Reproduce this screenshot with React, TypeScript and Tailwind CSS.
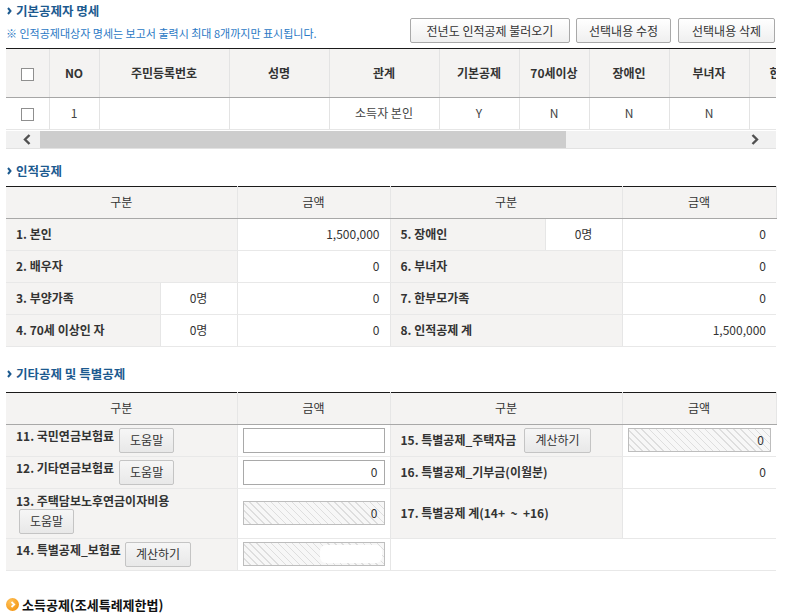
import React from 'react';

const Chevron = () => (
  <svg width="5" height="8" viewBox="0 0 5 8" className="ml-[7px] mr-[4px] shrink-0">
    <path d="M1 1l2.5 3L1 7" stroke="#1c5a8f" strokeWidth="2" fill="none" />
  </svg>
);

const SectionTitle = ({ children, className = '' }: { children: React.ReactNode; className?: string }) => (
  <div className={`flex items-center h-[20px] ${className}`}>
    <Chevron />
    <span className="text-[12.5px] font-bold text-[#1c5a8f] leading-[20px]">{children}</span>
  </div>
);

const Checkbox = () => <span className="inline-block w-[13px] h-[13px] border border-[#8f8f8f] bg-white align-middle" />;

const SmallButton = ({ children, className = '' }: { children: React.ReactNode; className?: string }) => (
  <button className={`h-[25px] px-[10px] shrink-0 bg-linear-to-b from-[#f6f6f6] to-[#e8e8e8] border border-[#c4c4c4] rounded-[2px] text-[12px] text-[#333] leading-none ${className}`}>
    {children}
  </button>
);

const TopButton = ({ children, className = '' }: { children: React.ReactNode; className?: string }) => (
  <button className={`h-[25px] bg-linear-to-b from-white to-[#efefef] border border-[#a9a9a9] rounded-[2px] text-[12px] text-[#333] leading-none ${className}`}>
    {children}
  </button>
);

const Hatched = ({ value, blob = false }: { value?: string; blob?: boolean }) => (
  <div className="mx-[5px] h-[24px] border border-[#bdbdbd] bg-[repeating-linear-gradient(45deg,#f7f7f7_0px,#f7f7f7_4px,#dedede_4px,#dedede_5px)] flex items-center justify-end pr-[6px] text-[12px] text-[#333]">
    {blob ? <span className="w-[62px] h-[18px] bg-white rounded-[6px] -mr-[4px]" /> : value}
  </div>
);

const Input = ({ value }: { value?: string }) => (
  <div className="mx-[5px] h-[25px] border border-[#a9a9a9] bg-white flex items-center justify-end pr-[6px] text-[12px] text-[#333]">
    {value}
  </div>
);

const th1 = 'bg-[#f4f3f2] border-r border-r-[#e3e3e3] border-b border-b-[#a6a6a6] text-[12px] font-bold text-[#333] text-center';
const td1 = 'border-r border-r-[#e3e3e3] border-b border-b-[#e6e6e6] text-[12px] text-[#444] text-center';

const th = 'h-[32px] bg-[#f4f3f2] border-r border-r-[#e6e6e6] border-b border-b-[#a8a8a8] text-[12px] font-normal text-[#333] text-center';
const lbl = 'h-[32px] bg-[#f4f3f2] border-r border-r-[#e6e6e6] border-b border-b-[#e8e8e8] text-[12px] font-bold text-[#333] text-left pl-[10px]';
const val = 'h-[32px] bg-white border-r border-r-[#e6e6e6] border-b border-b-[#e8e8e8] text-[12px] text-[#333] text-right pr-[10px]';
const valLast = 'h-[32px] bg-white border-b border-b-[#e8e8e8] text-[12px] text-[#333] text-right pr-[10px]';
const inp = 'h-[32px] bg-white border-r border-r-[#e6e6e6] border-b border-b-[#e8e8e8] text-[12px] text-[#333] p-0';
const inpLast = 'h-[32px] bg-white border-b border-b-[#e8e8e8] text-[12px] text-[#333] p-0';
const cnt = 'h-[32px] bg-white border-r border-r-[#e6e6e6] border-b border-b-[#e8e8e8] text-[12px] text-[#333] text-center';

const headers1 = ['주민등록번호', '성명', '관계', '기본공제', '70세이상', '장애인', '부녀자', '한부모'];
const widths1 = [43, 50, 130, 100, 110, 80, 70, 80, 80, 74];
const row1 = ['', '', '소득자 본인', 'Y', 'N', 'N', 'N', ''];

export default function App() {
  return (
    <div className="w-[785px] h-[616px] overflow-hidden bg-white font-['Noto_Sans_CJK_KR',sans-serif] text-[#333]">
      <div className="ml-[6px] w-[770px]">
        {/* 기본공제자 명세 */}
        <div className="flex justify-between items-end h-[48px] pb-[5px]">
          <div>
            <SectionTitle className="mt-[1px] -ml-[6px]">기본공제자 명세</SectionTitle>
            <div className="mt-[2px] h-[20px] leading-[20px] text-[11px] text-[#2a78c4]">
              ※ 인적공제대상자 명세는 보고서 출력시 최대 8개까지만 표시됩니다.
            </div>
          </div>
          <div className="flex gap-[6px] mr-[1px]">
            <TopButton className="w-[160px]">전년도 인적공제 불러오기</TopButton>
            <TopButton className="w-[95px]">선택내용 수정</TopButton>
            <TopButton className="w-[97px] ml-[1px]">선택내용 삭제</TopButton>
          </div>
        </div>

        <div className="overflow-hidden border-t border-t-[#1a1a1a]">
          <table className="table-fixed border-collapse w-[817px]">
            <colgroup>
              {widths1.map((w, i) => (
                <col key={i} style={{ width: w }} />
              ))}
            </colgroup>
            <thead>
              <tr className="h-[48px]">
                <th className={th1}>
                  <Checkbox />
                </th>
                <th className={th1}>NO</th>
                {headers1.map((h) => (
                  <th key={h} className={th1}>
                    {h}
                  </th>
                ))}
              </tr>
            </thead>
            <tbody>
              <tr className="h-[32px]">
                <td className={td1}>
                  <Checkbox />
                </td>
                <td className={td1}>1</td>
                {row1.map((c, i) => (
                  <td key={i} className={td1}>
                    {c}
                  </td>
                ))}
              </tr>
            </tbody>
          </table>
        </div>

        {/* scrollbar */}
        <div className="pt-[1px] border-b border-b-[#e2e2e2]">
          <div className="flex h-[17px] bg-[#f1f1f1]">
            <div className="w-[34px] flex items-center pl-[17px]">
              <svg width="8" height="11" viewBox="0 0 8 11">
                <path d="M6.5 1L2 5.5 6.5 10" stroke="#505050" strokeWidth="2.4" fill="none" />
              </svg>
            </div>
            <div className="w-[526px] bg-[#cdcdcd]" />
            <div className="flex-1" />
            <div className="w-[34px] flex items-center justify-end pr-[17px]">
              <svg width="8" height="11" viewBox="0 0 8 11">
                <path d="M1.5 1L6 5.5 1.5 10" stroke="#505050" strokeWidth="2.4" fill="none" />
              </svg>
            </div>
          </div>
        </div>

        {/* 인적공제 */}
        <SectionTitle className="mt-[12px] -ml-[6px]">인적공제</SectionTitle>
        <table className="mt-[5px] table-fixed border-collapse w-[770px] border-t border-t-[#1a1a1a]">
          <colgroup>
            <col style={{ width: 154 }} />
            <col style={{ width: 77 }} />
            <col style={{ width: 153 }} />
            <col style={{ width: 155 }} />
            <col style={{ width: 77 }} />
            <col style={{ width: 154 }} />
          </colgroup>
          <thead>
            <tr>
              <th colSpan={2} className={th}>구분</th>
              <th className={th}>금액</th>
              <th colSpan={2} className={th}>구분</th>
              <th className={th}>금액</th>
            </tr>
          </thead>
          <tbody>
            <tr>
              <td colSpan={2} className={lbl}>1. 본인</td>
              <td className={val}>1,500,000</td>
              <td className={lbl}>5. 장애인</td>
              <td className={cnt}>0명</td>
              <td className={valLast}>0</td>
            </tr>
            <tr>
              <td colSpan={2} className={lbl}>2. 배우자</td>
              <td className={val}>0</td>
              <td colSpan={2} className={lbl}>6. 부녀자</td>
              <td className={valLast}>0</td>
            </tr>
            <tr>
              <td className={lbl}>3. 부양가족</td>
              <td className={cnt}>0명</td>
              <td className={val}>0</td>
              <td colSpan={2} className={lbl}>7. 한부모가족</td>
              <td className={valLast}>0</td>
            </tr>
            <tr>
              <td className={lbl}>4. 70세 이상인 자</td>
              <td className={cnt}>0명</td>
              <td className={val}>0</td>
              <td colSpan={2} className={lbl}>8. 인적공제 계</td>
              <td className={valLast}>1,500,000</td>
            </tr>
          </tbody>
        </table>

        {/* 기타공제 및 특별공제 */}
        <SectionTitle className="mt-[17px] -ml-[6px]">기타공제 및 특별공제</SectionTitle>
        <table className="mt-[8px] table-fixed border-collapse w-[770px] border-t border-t-[#1a1a1a]">
          <colgroup>
            <col style={{ width: 231 }} />
            <col style={{ width: 153 }} />
            <col style={{ width: 232 }} />
            <col style={{ width: 154 }} />
          </colgroup>
          <thead>
            <tr>
              <th className={th}>구분</th>
              <th className={th}>금액</th>
              <th className={th}>구분</th>
              <th className={th}>금액</th>
            </tr>
          </thead>
          <tbody>
            <tr>
              <td className={`${lbl} align-top pt-[3px]`}>
                <div className="flex items-start gap-[5px]">
                  <span className="leading-[16px]">11. 국민연금보험료</span>
                  <SmallButton className="font-normal">도움말</SmallButton>
                </div>
              </td>
              <td className={inp}>
                <Input />
              </td>
              <td className={lbl}>
                <div className="flex items-center gap-[8px]">
                  <span>15. 특별공제_주택자금</span>
                  <SmallButton className="font-normal h-[24px]">계산하기</SmallButton>
                </div>
              </td>
              <td className={inpLast}>
                <Hatched value="0" />
              </td>
            </tr>
            <tr>
              <td className={`${lbl} align-top pt-[3px]`}>
                <div className="flex items-start gap-[5px]">
                  <span className="leading-[16px]">12. 기타연금보험료</span>
                  <SmallButton className="font-normal">도움말</SmallButton>
                </div>
              </td>
              <td className={inp}>
                <Input value="0" />
              </td>
              <td className={lbl}>16. 특별공제_기부금(이월분)</td>
              <td className={valLast}>0</td>
            </tr>
            <tr>
              <td className={`${lbl} h-[48px] align-top pt-[4px] pb-[4px]`}>
                <div className="leading-[16px]">13. 주택담보노후연금이자비용</div>
                <SmallButton className="font-normal h-[23px] ml-[3px]">도움말</SmallButton>
              </td>
              <td className={`${inp} h-[48px]`}>
                <Hatched value="0" />
              </td>
              <td className={`${lbl} h-[48px]`}>17. 특별공제 계(14+&nbsp; ~&nbsp; +16)</td>
              <td className={`${valLast} h-[48px]`}></td>
            </tr>
            <tr>
              <td className={`${lbl} align-top pt-[3px]`}>
                <div className="flex items-start gap-[4px]">
                  <span className="leading-[16px]">14. 특별공제_보험료</span>
                  <SmallButton className="font-normal">계산하기</SmallButton>
                </div>
              </td>
              <td className={inp}>
                <Hatched blob />
              </td>
              <td colSpan={2} className={valLast}></td>
            </tr>
          </tbody>
        </table>

        {/* 소득공제 */}
        <div className="mt-[24px] flex items-center h-[20px]">
          <span className="w-[13px] h-[13px] rounded-full bg-radial-[at_35%_30%] from-[#ffc25a] to-[#f08a00] flex items-center justify-center shrink-0">
            <svg width="6" height="7" viewBox="0 0 6 7">
              <path d="M1.5 1L4.2 3.5 1.5 6" stroke="#fff" strokeWidth="1.8" fill="none" />
            </svg>
          </span>
          <span className="ml-[3px] text-[13px] font-bold text-[#111] leading-[20px]">소득공제(조세특례제한법)</span>
        </div>
      </div>
    </div>
  );
}
